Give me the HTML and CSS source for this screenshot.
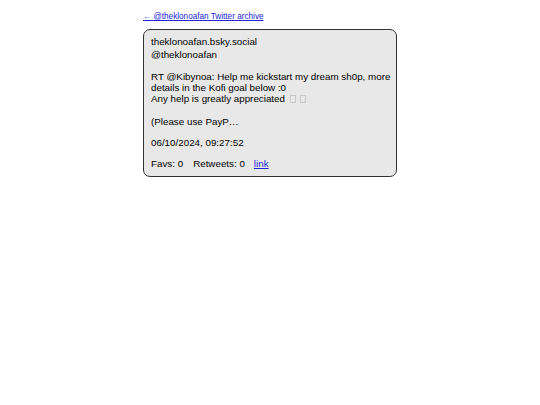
FILE: index.html
```html
<!DOCTYPE html>
<html>
<head>
<meta charset="utf-8">
<link rel="stylesheet" href="styles.css">
</head>
<body>
<div class="page">
  <a class="back" href="#">← @theklonoafan Twitter archive</a>
  <div class="card">
    <div class="name">theklonoafan.bsky.social</div>
    <div class="handle">@theklonoafan</div>
    <p class="text">RT @Kibynoa: Help me kickstart my dream sh0p, more details in the Kofi goal below :0<br>Any help is greatly appreciated <span class="box"></span> <span class="box"></span></p>
    <p class="more">(Please use PayP…</p>
    <p class="date">06/10/2024, 09:27:52</p>
    <p class="stats"><span>Favs: 0</span><span>Retweets: 0</span><a href="#">link</a></p>
  </div>
</div>
</body>
</html>
```
FILE: styles.css
```css
html, body { margin: 0; padding: 0; background: #fff; }
body { font-family: "Liberation Sans", Arial, sans-serif; color: #000; }
.page { width: 254px; margin: 11px 0 0 143px; }
.back { font-size: 8.2px; color: #2323d8; display: block; line-height: 11px; }
.card { margin-top: 7px; border: 1px solid #333; border-radius: 7px; background: #e8e8e8; padding: 5px 5px 7px 7px; font-size: 9.8px; line-height: 11px; }
.name { line-height: 13px; }
.handle { line-height: 13px; }
.card p { margin: 10px 0 0; }
.card p.more { margin-top: 12px; }
.box { display: inline-block; width: 4px; height: 6px; border: 1px solid #c8c8c8; margin-left: 2px; vertical-align: -1px; }
.stats span { margin-right: 10px; }
.stats a { color: #2323d8; margin-left: -1px; }
```
